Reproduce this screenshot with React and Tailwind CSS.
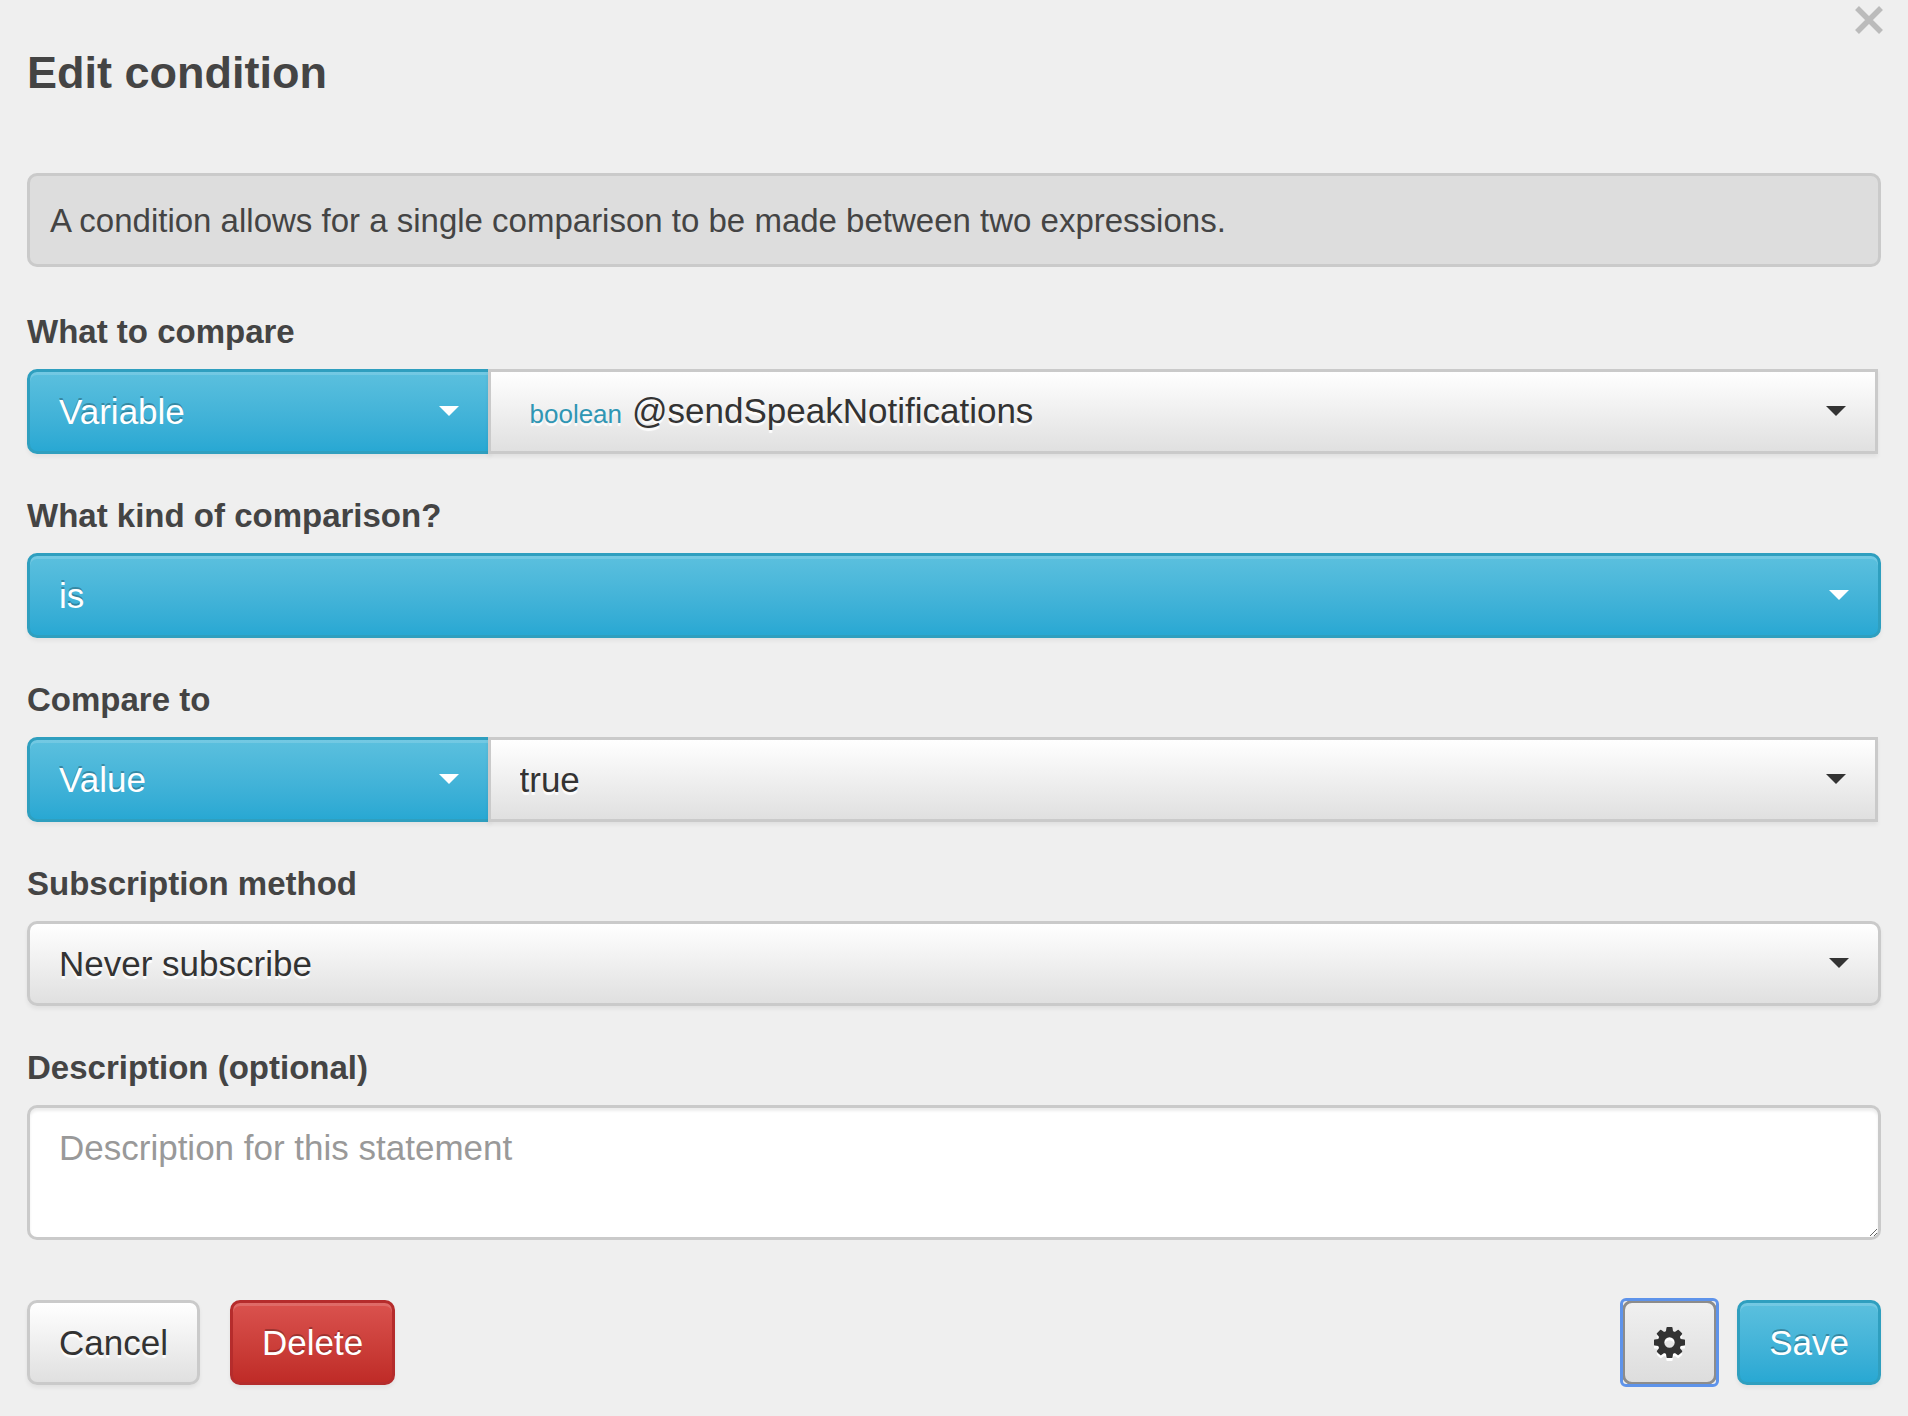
import React from "react";

const blue =
  "border-[#2f9fbf] bg-linear-to-b from-[#5bc0de] to-[#28a8d3] text-white [text-shadow:0_-2px_0_rgba(0,0,0,0.25)] shadow-[inset_0_3px_0_rgba(255,255,255,0.15),0_3px_4px_rgba(0,0,0,0.05)]";
const light =
  "border-[#cacaca] bg-linear-to-b from-white to-[#e0e0e0] text-[#333333] [text-shadow:0_3px_1px_rgba(255,255,255,0.9)] shadow-[0_3px_4px_rgba(0,0,0,0.06)]";
const red =
  "border-[#b52c2c] bg-linear-to-b from-[#da524e] to-[#bf2b27] text-white [text-shadow:0_-2px_0_rgba(0,0,0,0.25)] shadow-[inset_0_3px_0_rgba(255,255,255,0.15),0_3px_4px_rgba(0,0,0,0.05)]";

const control =
  "h-[85px] w-full appearance-none border-[3px] px-[29px] text-left text-[35px] leading-[50px]";
const button =
  "h-[85px] rounded-[10px] border-[3px] px-[29px] text-[35px] leading-[50px]";

function Caret() {
  return (
    <span className="pointer-events-none absolute top-[37px] right-8 border-x-10 border-t-10 border-x-transparent border-t-current" />
  );
}

function Select({ id, label, value, tone, shape }) {
  return (
    <div className={`relative ${tone === blue ? "text-white" : "text-[#333333]"}`}>
      <select id={id} aria-label={label} className={`${control} ${tone} ${shape}`}>
        <option>{value}</option>
      </select>
      <Caret />
    </div>
  );
}

function Field({ id, label, children }) {
  return (
    <div className="flex flex-col gap-3">
      <label htmlFor={id} className="text-[33px] leading-[50px] font-bold">
        {label}
      </label>
      {children}
    </div>
  );
}

function Cog() {
  return (
    <svg
      viewBox="0 0 1536 1536"
      className="size-[31px] drop-shadow-[0_3px_0_#ffffff]"
      fill="currentColor"
      aria-hidden="true"
    >
      <path
        transform="translate(0 1408) scale(1 -1)"
        d="M1024 640q0 106 -75 181t-181 75t-181 -75t-75 -181t75 -181t181 -75t181 75t75 181zM1536 749v-222q0 -12 -8 -23t-20 -13l-185 -28q-19 -54 -39 -91q35 -50 107 -138q10 -12 10 -25t-9 -23q-27 -37 -99 -108t-94 -71q-12 0 -26 9l-138 108q-44 -23 -91 -38q-16 -136 -29 -186q-7 -28 -36 -28h-222q-14 0 -24.5 8.5t-11.5 21.5l-28 184q-49 16 -90 37l-141 -107q-10 -9 -25 -9q-14 0 -25 11q-126 114 -165 168q-7 10 -7 23q0 12 8 23q15 21 51 66.5t54 70.5q-27 50 -41 99l-183 27q-13 2 -21 12.5t-8 23.5v222q0 12 8 23t19 13l186 28q14 46 39 92q-40 57 -107 138q-10 12 -10 24q0 10 9 23q26 36 98.5 107.5t94.5 71.5q13 0 26 -10l138 -107q44 23 91 38q16 136 29 186q7 28 36 28h222q14 0 24.5 -8.5t11.5 -21.5l28 -184q49 -16 90 -37l142 107q9 9 24 9q13 0 25 -10q129 -119 165 -170q7 -8 7 -22q0 -12 -8 -23q-15 -21 -51 -66.5t-54 -70.5q26 -50 41 -98l183 -28q13 -2 21 -12.5t8 -23.5z"
      />
    </svg>
  );
}

export default function App() {
  return (
    <main className="min-h-screen bg-[#efefef] px-[27px] pb-8 font-['Liberation_Sans',Arial,sans-serif] text-[#444444]">
      <header className="flex items-start justify-between">
        <h1 className="pt-12 text-[45px] leading-[50px] font-bold">Edit condition</h1>
        <button type="button" aria-label="Close" className="-mr-0.5 pt-1.5 text-[#bbbbbb]">
          <svg viewBox="0 0 28 28" className="size-7" stroke="currentColor" strokeWidth="5.5" aria-hidden="true">
            <path d="M2 2 26 26M26 2 2 26" />
          </svg>
        </button>
      </header>

      <p className="mt-[75px] rounded-[10px] border-[3px] border-[#cacaca] bg-[#dddddd] px-5 pt-5 pb-[18px] text-[33px] leading-[50px]">
        A condition allows for a single comparison to be made between two expressions.
      </p>

      <form className="mt-10 flex flex-col gap-[37px]">
        <Field id="left-kind" label="What to compare">
          <div className="flex">
            <div className="w-1/4 flex-none">
              <Select id="left-kind" label="What to compare" value="Variable" tone={blue} shape="rounded-l-[10px]" />
            </div>
            <div className="relative -ml-[3px] w-3/4 flex-none text-[#333333]">
              <button type="button" aria-haspopup="listbox" className={`${control} ${light} pt-0.5`}>
                <span className="px-2.5 text-[26px] text-[#2f96b4]">boolean</span>
                @sendSpeakNotifications
              </button>
              <Caret />
            </div>
          </div>
        </Field>

        <Field id="operator" label="What kind of comparison?">
          <Select id="operator" label="What kind of comparison?" value="is" tone={blue} shape="rounded-[10px]" />
        </Field>

        <Field id="right-kind" label="Compare to">
          <div className="flex">
            <div className="w-1/4 flex-none">
              <Select id="right-kind" label="Compare to" value="Value" tone={blue} shape="rounded-l-[10px]" />
            </div>
            <div className="-ml-[3px] w-3/4 flex-none">
              <Select id="right-value" label="Value to compare to" value="true" tone={light} shape="rounded-none" />
            </div>
          </div>
        </Field>

        <Field id="subscription" label="Subscription method">
          <Select id="subscription" label="Subscription method" value="Never subscribe" tone={light} shape="rounded-[10px]" />
        </Field>

        <Field id="description" label="Description (optional)">
          <textarea
            id="description"
            placeholder="Description for this statement"
            className="block h-[135px] w-full resize rounded-[10px] border-[3px] border-[#cacaca] bg-white px-[29px] py-[15px] text-[35px] leading-[50px] shadow-[inset_0_3px_3px_rgba(0,0,0,0.075)] placeholder:text-[#999999]"
          />
        </Field>

        <div className="mt-[23px] flex items-center">
          <button type="button" className={`${button} ${light}`}>Cancel</button>
          <button type="button" className={`${button} ${red} ml-[30px]`}>Delete</button>
          <div className="ml-auto rounded-[4px] outline-3 -outline-offset-1 outline-[#5e93ea]">
            <button
              type="button"
              aria-label="Settings"
              className="flex h-[85px] items-center rounded-[10px] border-[3px] border-[#8c8c8c] bg-linear-to-b from-[#f0f0f0] to-[#dddddd] px-[29px] text-[#333333]"
            >
              <Cog />
            </button>
          </div>
          <button type="submit" className={`${button} ${blue} ml-5`}>Save</button>
        </div>
      </form>
    </main>
  );
}
